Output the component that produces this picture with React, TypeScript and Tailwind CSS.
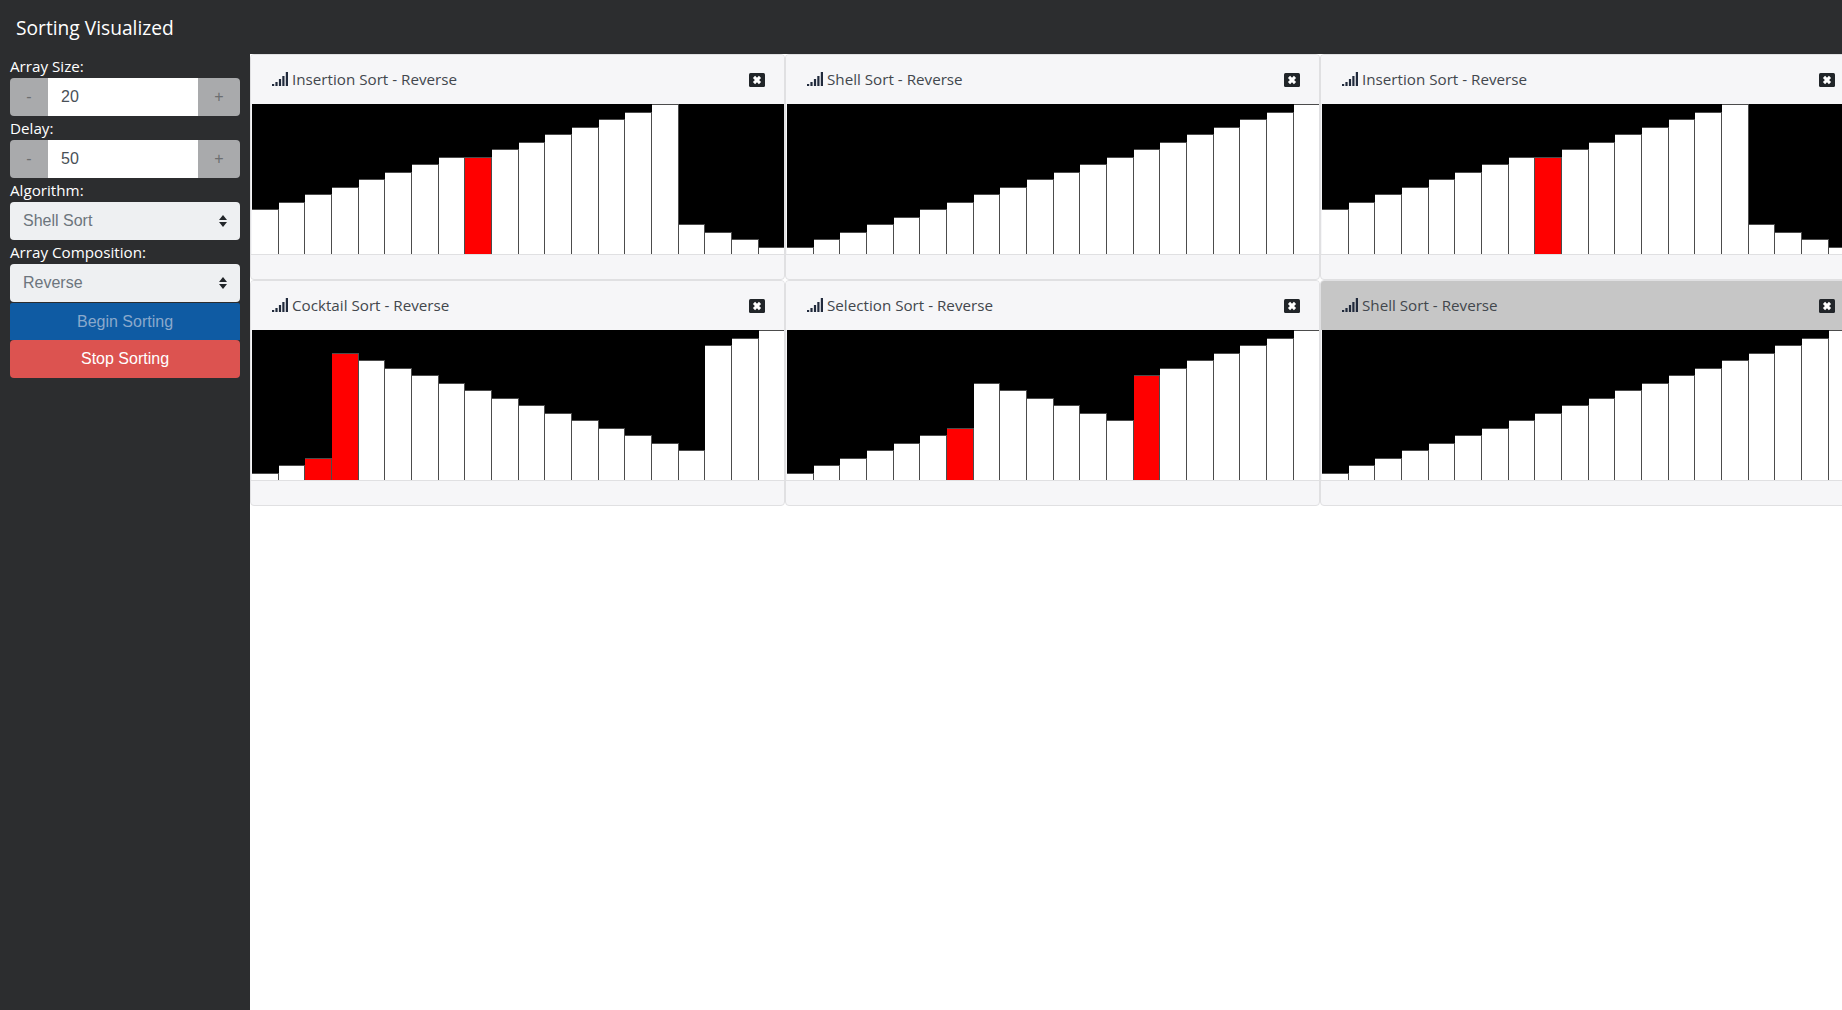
import React from 'react';

const UI_FONT = 'font-["Open_Sans",sans-serif]';
const ARIAL = 'font-["Liberation_Sans",Arial,sans-serif]';

const asc = Array.from({ length: 20 }, (_, i) => i + 1);
const insertion = [6, 7, 8, 9, 10, 11, 12, 13, 13, 14, 15, 16, 17, 18, 19, 20, 4, 3, 2, 1];

const cards = [
  { title: 'Insertion Sort - Reverse', bars: insertion, red: [8] },
  { title: 'Shell Sort - Reverse', bars: asc, red: [] },
  { title: 'Insertion Sort - Reverse', bars: insertion, red: [8] },
  {
    title: 'Cocktail Sort - Reverse',
    bars: [1, 2, 3, 17, 16, 15, 14, 13, 12, 11, 10, 9, 8, 7, 6, 5, 4, 18, 19, 20],
    red: [2, 3],
  },
  {
    title: 'Selection Sort - Reverse',
    bars: [1, 2, 3, 4, 5, 6, 7, 13, 12, 11, 10, 9, 8, 14, 15, 16, 17, 18, 19, 20],
    red: [6, 13],
  },
  { title: 'Shell Sort - Reverse', bars: asc, red: [], active: true },
];

function SignalIcon() {
  return (
    <svg width="16" height="14" viewBox="0 0 16 14" className="shrink-0 text-[#212a3c]" fill="currentColor">
      <rect x="0" y="12" width="2.2" height="2" />
      <rect x="3.4" y="10" width="2.2" height="4" />
      <rect x="6.9" y="7" width="2.2" height="7" />
      <rect x="10.3" y="4" width="2.2" height="10" />
      <rect x="13.8" y="0" width="2.2" height="14" />
    </svg>
  );
}

function CloseIcon() {
  return (
    <svg width="16" height="14" viewBox="0 0 16 14" className="shrink-0">
      <rect width="16" height="14" rx="1.5" fill="#212529" />
      <path d="M5 3.9 11 10.1M11 3.9 5 10.1" stroke="#fff" strokeWidth="3" />
    </svg>
  );
}

function Stepper({ label, value }: { label: string; value: string }) {
  return (
    <div>
      <div className="h-6 text-[15.2px] leading-6 text-white">{label}</div>
      <div className={`flex h-[38px] overflow-hidden rounded ${ARIAL}`}>
        <button className="w-[38px] bg-[#a9aaac] text-base text-[#6c6e70]">-</button>
        <input
          readOnly
          value={value}
          className="min-w-0 flex-1 bg-white pl-[13px] text-base text-[#495057] outline-none"
        />
        <button className="w-[42px] bg-[#a9aaac] text-base text-[#6c6e70]">+</button>
      </div>
    </div>
  );
}

function Picker({ label, value }: { label: string; value: string }) {
  return (
    <div>
      <div className="h-6 text-[15.2px] leading-6 text-white">{label}</div>
      <div className="relative">
        <select
          defaultValue={value}
          className={`block h-[38px] w-full appearance-none rounded bg-[#eef0f2] pl-[13px] text-base text-[#6c757d] outline-none ${ARIAL}`}
        >
          <option>{value}</option>
        </select>
        <svg width="8" height="12" viewBox="0 0 8 12" className="absolute right-[13px] top-[13px]" fill="#22262a">
          <path d="M4 0 8 5H0zM0 7h8l-4 5z" />
        </svg>
      </div>
    </div>
  );
}

function SortCard({ title, bars, red, active }: { title: string; bars: number[]; red: number[]; active?: boolean }) {
  return (
    <div className="overflow-hidden rounded border border-[#e0e0e2] bg-[#f6f6f8]">
      <div
        className={`flex h-[49px] items-center justify-between pl-[21px] pr-[19px] ${
          active ? 'bg-[#c6c6c6]' : 'bg-[#f6f6f8]'
        }`}
      >
        <div className="flex items-center gap-[4px] text-[15.2px] text-[#42474d]">
          <SignalIcon />
          <span>{title}</span>
        </div>
        <CloseIcon />
      </div>
      {/* bars run one pixel past the card edge, the card clips them */}
      <div className="ml-px flex h-[150px] w-[533.4px] items-end bg-black">
        {bars.map((v, i) => (
          <div
            key={i}
            className={`flex-1 border-r border-t border-[#4c4c4c] ${red.includes(i) ? 'bg-[#ff0000]' : 'bg-white'}`}
            style={{ height: v * 7.5 }}
          />
        ))}
      </div>
      <div className="h-[25px] border-t border-[#e0e0e2]" />
    </div>
  );
}

export default function App() {
  return (
    <div className={`flex h-screen w-screen flex-col overflow-hidden bg-white ${UI_FONT}`}>
      <nav className="flex h-[54px] shrink-0 items-center bg-[#2c2d2f] pl-4 pt-[2px] text-[19.2px] text-white">
        Sorting Visualized
      </nav>
      <div className="flex min-h-0 flex-1">
        <aside className="w-[250px] shrink-0 bg-[#2c2d2f] pl-[10px] pr-[10px]">
          <Stepper label="Array Size:" value="20" />
          <Stepper label="Delay:" value="50" />
          <Picker label="Algorithm:" value="Shell Sort" />
          <Picker label="Array Composition:" value="Reverse" />
          <div className={`mt-px flex flex-col text-base ${ARIAL}`}>
            <button className="h-[37px] rounded-t-[2px] bg-[#0f5ba3] text-[#8aa9cc]">Begin Sorting</button>
            <button className="h-[38px] rounded bg-[#dc5350] text-white">Stop Sorting</button>
          </div>
        </aside>
        <main className="grid min-w-0 flex-1 grid-cols-[repeat(3,535px)] content-start overflow-hidden">
          {cards.map((c, i) => (
            <SortCard key={i} {...c} />
          ))}
        </main>
      </div>
    </div>
  );
}
